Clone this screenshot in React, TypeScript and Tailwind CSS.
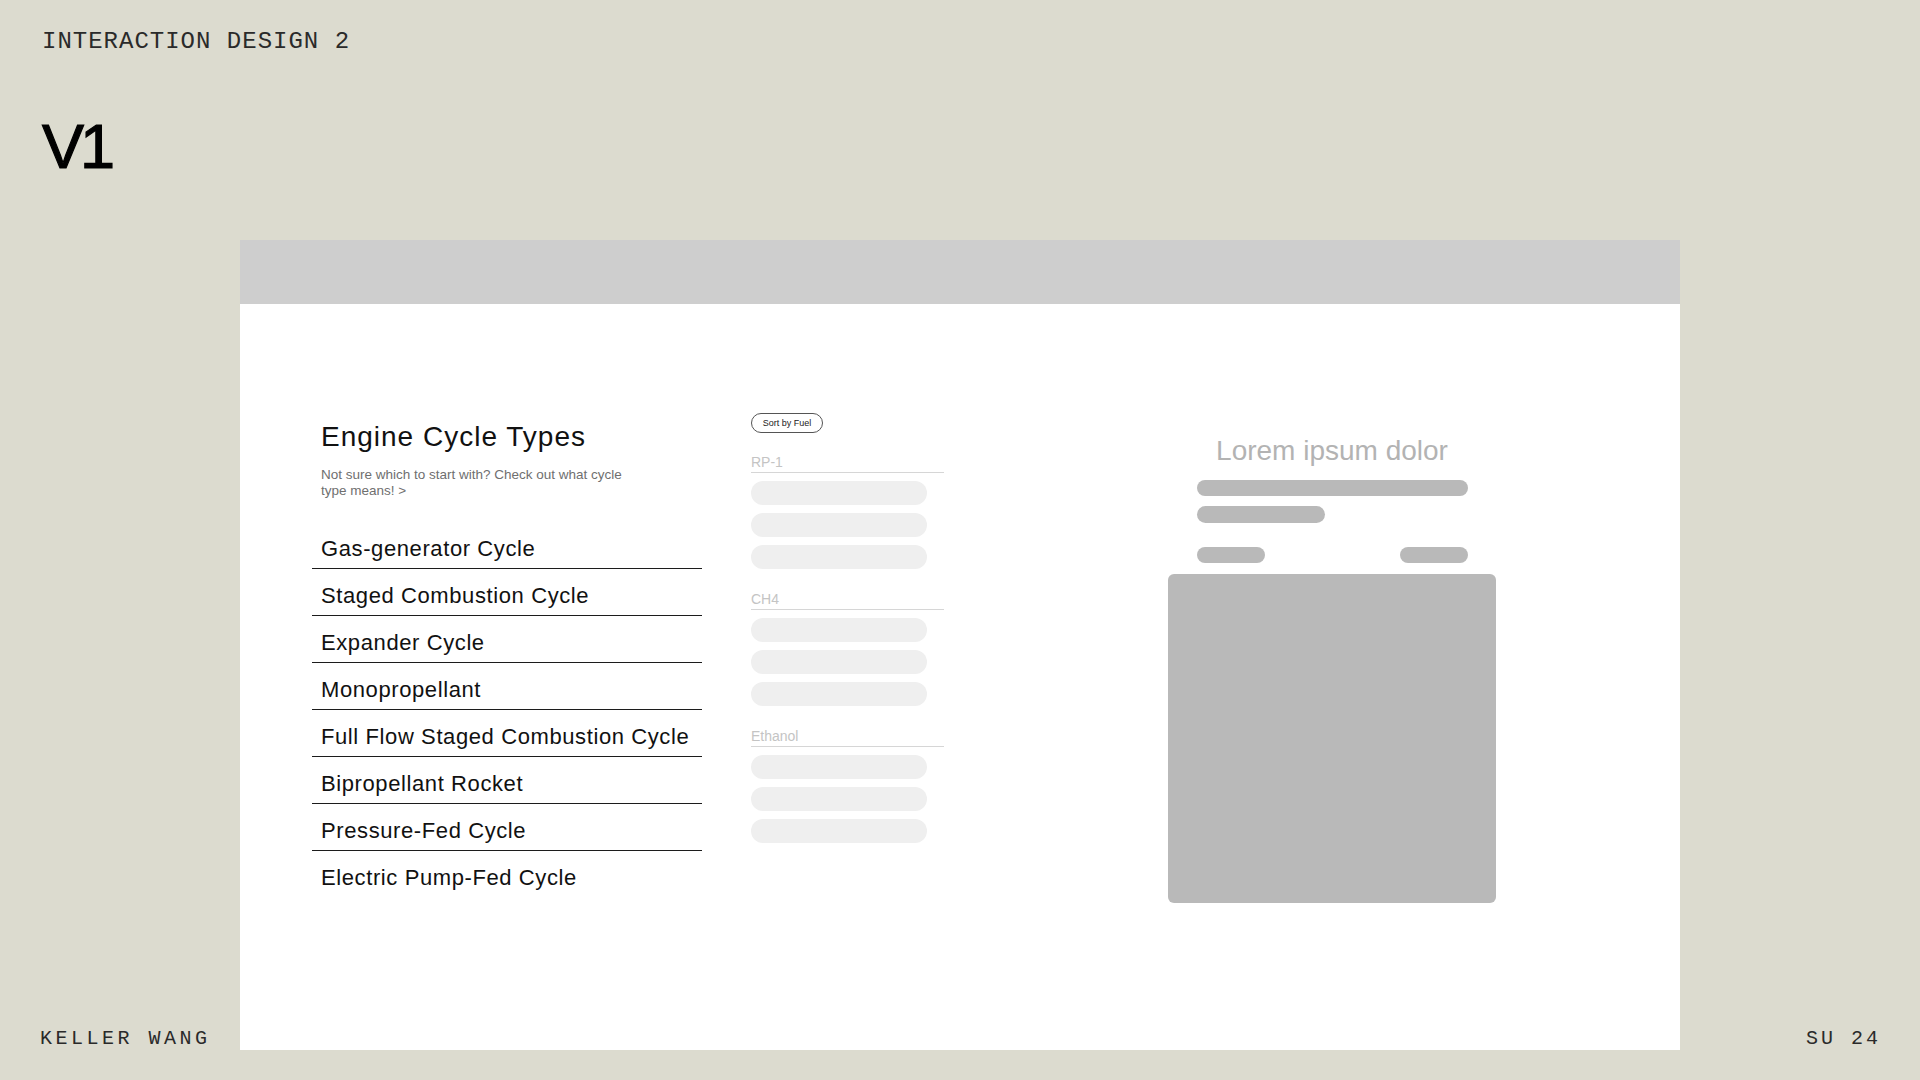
const cycles = [
  "Gas-generator Cycle",
  "Staged Combustion Cycle",
  "Expander Cycle",
  "Monopropellant",
  "Full Flow Staged Combustion Cycle",
  "Bipropellant Rocket",
  "Pressure-Fed Cycle",
  "Electric Pump-Fed Cycle",
];

const fuels = ["RP-1", "CH4", "Ethanol"];

export default function App() {
  return (
    <div className="w-[1920px] h-[1080px] bg-[#dcdbcf] flex flex-col font-['Liberation_Sans',Arial,sans-serif] text-[#111]">

      {/* Top */}

      <div className="h-[240px] px-[42px] pt-[30px]">
        <p className="font-['Liberation_Mono','Courier_New',monospace] text-[24px] leading-none tracking-[1px] text-[#2a2a2a]">
          INTERACTION DESIGN 2
        </p>
        <h1 className="mt-[61px] text-[63px] leading-none tracking-[-4px] text-black [-webkit-text-stroke:1.2px_#000]">
          V1
        </h1>
      </div>

      <div className="flex">

        {/* Left gutter */}

        <div className="w-[240px] flex items-end pl-[40px] pb-[1px]">
          <p className="font-['Liberation_Mono','Courier_New',monospace] text-[20px] leading-none tracking-[3.5px] text-[#2a2a2a]">
            KELLER WANG
          </p>
        </div>

        {/* Slide */}

        <div className="w-[1440px] h-[810px] bg-white flex flex-col">
          <div className="h-[64px] bg-[#cecece]" />

          <div className="flex items-start">

            {/* Cycle list */}

            <div className="ml-[72px] w-[390px] pt-[119px]">
              <h2 className="pl-[9px] text-[28px] leading-none tracking-[1px]">
                Engine Cycle Types
              </h2>
              <p className="pl-[9px] mt-[16px] w-[335px] text-[13.5px] leading-[16px] text-[#6f6f6f]">
                Not sure which to start with? Check out what cycle type means! &gt;
              </p>

              <ul className="mt-[23px]">
                {cycles.map((c, i) => (
                  <li
                    key={c}
                    className={
                      i < cycles.length - 1
                        ? "pl-[9px] pt-[13px] pb-[5px] border-b border-[#1c1c1c]"
                        : "pl-[9px] pt-[13px] pb-[5px]"
                    }
                  >
                    <span className="block text-[22px] leading-[28px] tracking-[0.6px]">
                      {c}
                    </span>
                  </li>
                ))}
              </ul>
            </div>

            {/* Fuel filter */}

            <div className="ml-[49px] w-[193px] pt-[109px]">
              <button className="w-[72px] h-[20px] rounded-full border border-[#555] text-[9px] leading-none text-[#222] flex items-center justify-center">
                Sort by Fuel
              </button>

              <div className="mt-[22px] flex flex-col gap-[23px]">
                {fuels.map((f) => (
                  <div key={f}>
                    <p className="text-[14px] leading-[14px] pb-[3px] border-b border-[#d6d6d6] text-[#c4c4c4]">
                      {f}
                    </p>
                    <div className="mt-[8px] flex flex-col gap-[8px]">
                      <div className="w-[176px] h-[24px] rounded-full bg-[#efefef]" />
                      <div className="w-[176px] h-[24px] rounded-full bg-[#efefef]" />
                      <div className="w-[176px] h-[24px] rounded-full bg-[#efefef]" />
                    </div>
                  </div>
                ))}
              </div>
            </div>

            {/* Detail */}

            <div className="ml-[224px] w-[328px] pt-[133px]">
              <p className="text-center text-[28px] leading-none text-[#b3b3b3]">
                Lorem ipsum dolor
              </p>

              <div className="w-[271px] mx-auto mt-[15px]">
                <div className="h-[16px] rounded-full bg-[#b9b9b9]" />
                <div className="mt-[10px] w-[128px] h-[17px] rounded-full bg-[#b9b9b9]" />
                <div className="mt-[24px] flex justify-between">
                  <div className="w-[68px] h-[16px] rounded-full bg-[#b9b9b9]" />
                  <div className="w-[68px] h-[16px] rounded-full bg-[#b9b9b9]" />
                </div>
              </div>

              <div className="mt-[11px] h-[329px] rounded-[6px] bg-[#b9b9b9]" />
            </div>

          </div>
        </div>

        {/* Right gutter */}

        <div className="w-[240px] flex items-end justify-end pr-[42px] pb-[1px]">
          <p className="font-['Liberation_Mono','Courier_New',monospace] text-[20px] leading-none tracking-[3px] text-[#2a2a2a] mr-[-3px]">
            SU 24
          </p>
        </div>

      </div>
    </div>
  );
}
